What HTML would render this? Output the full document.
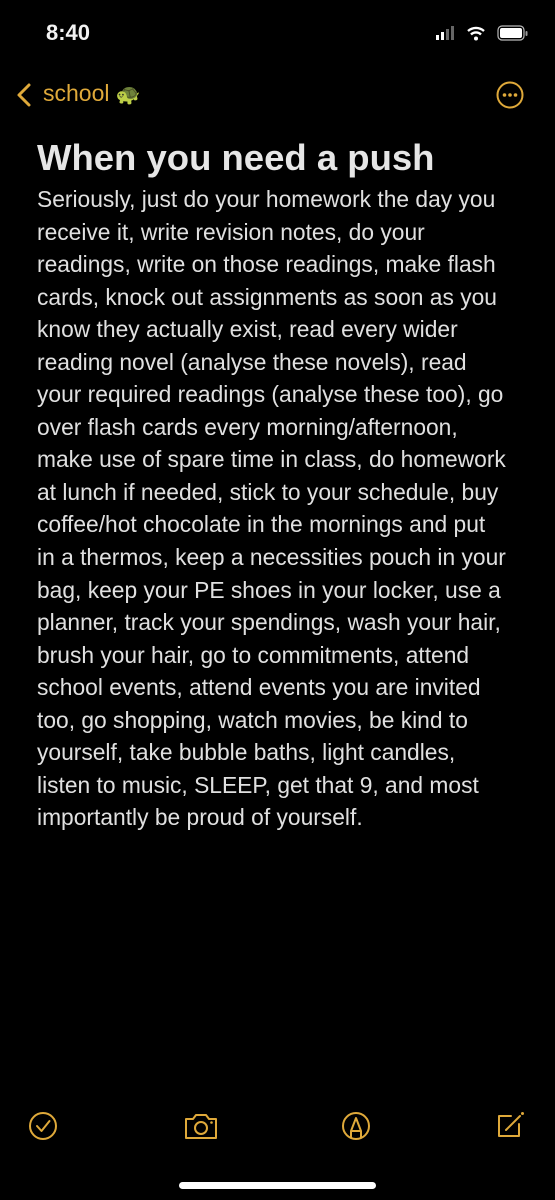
<!DOCTYPE html>
<html><head><meta charset="utf-8"><style>
html,body{margin:0;padding:0;background:#000;}
body{width:555px;height:1200px;position:relative;overflow:hidden;font-family:"Liberation Sans",sans-serif;color:#e4e4e4;}
.time{position:absolute;left:46px;top:20px;font-size:22px;font-weight:bold;color:#f2f2f2;}
.nav{position:absolute;color:#dfa93a;font-size:23px;}
.title{position:absolute;left:37px;top:137px;font-size:36.5px;font-weight:bold;color:#e6e6e6;}
.body{position:absolute;left:37px;top:183px;font-size:22.8px;line-height:32.55px;white-space:nowrap;color:#e0e0e0;}
.home{position:absolute;left:179px;top:1182px;width:197px;height:7px;border-radius:4px;background:#fff;}
</style></head><body>
<div class="time">8:40</div>
<svg style="position:absolute;left:436px;top:25px" width="96" height="18">
<rect x="0" y="10" width="3" height="5" fill="#fff"/><rect x="5" y="7" width="3" height="8" fill="#fff"/><rect x="10" y="4" width="3" height="11" fill="#666"/><rect x="15" y="1" width="3" height="14" fill="#666"/>
<path d="M32 6a12 12 0 0 1 16 0" stroke="#fff" stroke-width="2.4" fill="none"/><path d="M35 9.5a7 7 0 0 1 10 0" stroke="#fff" stroke-width="2.4" fill="none"/><circle cx="40" cy="13.5" r="2" fill="#fff"/>
<rect x="62" y="1" width="26" height="14" rx="4" fill="none" stroke="#bbb" stroke-width="1.2"/><rect x="64" y="3" width="22" height="10" rx="2" fill="#fff"/><rect x="89.5" y="6" width="2" height="5" rx="1" fill="#999"/>
</svg>
<svg style="position:absolute;left:14px;top:82px" width="20" height="26"><path d="M15 3L5 13l10 10" stroke="#dfa93a" stroke-width="3" fill="none" stroke-linecap="round" stroke-linejoin="round"/></svg>
<div class="nav" style="left:43px;top:80px">school <span style="font-size:20px">🐢</span></div>
<svg style="position:absolute;left:495px;top:80px" width="30" height="30"><circle cx="15" cy="15" r="12.5" fill="none" stroke="#dfa93a" stroke-width="2"/><circle cx="9.5" cy="15" r="1.8" fill="#dfa93a"/><circle cx="15" cy="15" r="1.8" fill="#dfa93a"/><circle cx="20.5" cy="15" r="1.8" fill="#dfa93a"/></svg>
<div class="title">When you need a push</div>
<div class="body">Seriously, just do your homework the day you<br>receive it, write revision notes, do your<br>readings, write on those readings, make flash<br>cards, knock out assignments as soon as you<br>know they actually exist, read every wider<br>reading novel (analyse these novels), read<br>your required readings (analyse these too), go<br>over flash cards every morning/afternoon,<br>make use of spare time in class, do homework<br>at lunch if needed, stick to your schedule, buy<br>coffee/hot chocolate in the mornings and put<br>in a thermos, keep a necessities pouch in your<br>bag, keep your PE shoes in your locker, use a<br>planner, track your spendings, wash your hair,<br>brush your hair, go to commitments, attend<br>school events, attend events you are invited<br>too, go shopping, watch movies, be kind to<br>yourself, take bubble baths, light candles,<br>listen to music, SLEEP, get that 9, and most<br>importantly be proud of yourself.</div>
<svg style="position:absolute;left:27px;top:1110px" width="32" height="32"><circle cx="16" cy="16" r="13" fill="none" stroke="#dfa93a" stroke-width="2"/><path d="M10 16l4.5 5 8-10" stroke="#dfa93a" stroke-width="2" fill="none" stroke-linecap="round" stroke-linejoin="round"/></svg>
<svg style="position:absolute;left:182px;top:1110px" width="38" height="32"><path d="M4 9h7l3-4h10l3 4h7v19H4z" fill="none" stroke="#dfa93a" stroke-width="2" stroke-linejoin="round"/><circle cx="19" cy="18" r="6" fill="none" stroke="#dfa93a" stroke-width="2"/><circle cx="29.5" cy="12.5" r="1.3" fill="#dfa93a"/></svg>
<svg style="position:absolute;left:340px;top:1110px" width="32" height="32"><circle cx="16" cy="16" r="13" fill="none" stroke="#dfa93a" stroke-width="2"/><path d="M11 28V21L16 8l5 13v7M11 21h10" stroke="#dfa93a" stroke-width="2" fill="none" stroke-linejoin="round"/></svg>
<svg style="position:absolute;left:494px;top:1108px" width="34" height="34"><path d="M17 8H5v20h20V16" fill="none" stroke="#dfa93a" stroke-width="2" stroke-linejoin="round" stroke-linecap="round"/><path d="M12 22l14-14" stroke="#dfa93a" stroke-width="2" stroke-linecap="round"/><circle cx="28.5" cy="5.5" r="1.5" fill="#dfa93a"/></svg>
<div class="home"></div>
</body></html>
